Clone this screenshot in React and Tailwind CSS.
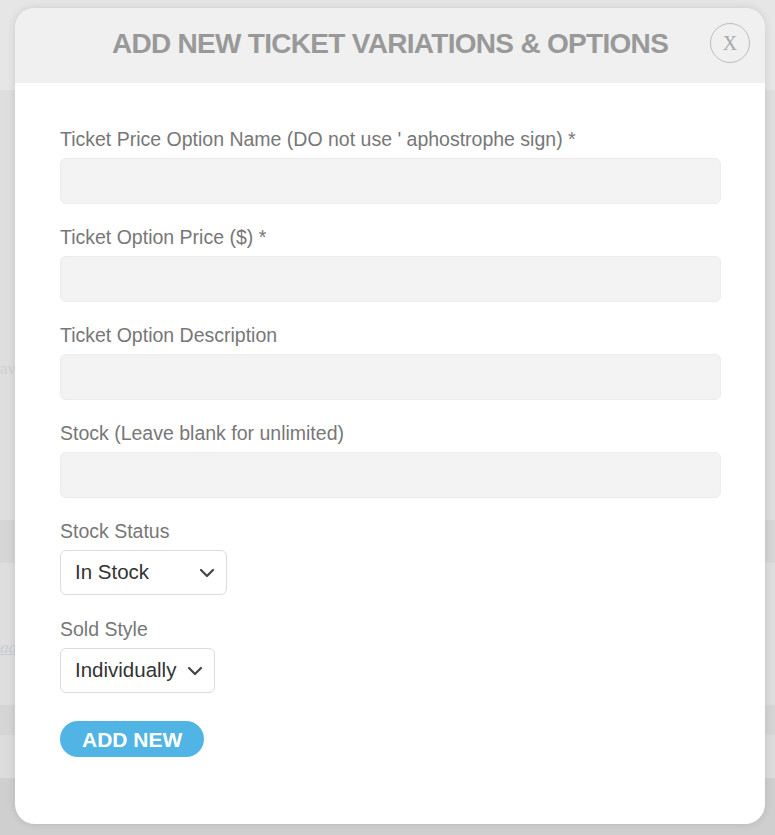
import { useState } from 'react'

const FIELDS = [
  { key: 'name', label: "Ticket Price Option Name (DO not use ' aphostrophe sign) *" },
  { key: 'price', label: 'Ticket Option Price ($) *' },
  { key: 'description', label: 'Ticket Option Description' },
  { key: 'stock', label: 'Stock (Leave blank for unlimited)' },
]

function Chevron() {
  return (
    <svg width="16" height="10" viewBox="0 0 16 10" className="pointer-events-none absolute top-1/2 right-[12px] -translate-y-1/2">
      <path d="M2 2 L8 8 L14 2" fill="none" stroke="#444" strokeWidth="2.2" strokeLinecap="round" strokeLinejoin="round" />
    </svg>
  )
}

function SelectBox({ value, options, onChange, width }) {
  return (
    <div className={`relative ${width}`}>
      <select
        value={value}
        onChange={(e) => onChange(e.target.value)}
        className="h-[45px] w-full appearance-none rounded-[6px] border border-[#dcdcdc] bg-white pl-[14px] pr-8 text-[20.5px] text-[#333] focus:outline-none"
      >
        {options.map((o) => (
          <option key={o}>{o}</option>
        ))}
      </select>
      <Chevron />
    </div>
  )
}

export default function App() {
  const [values, setValues] = useState({})
  const [stockStatus, setStockStatus] = useState('In Stock')
  const [soldStyle, setSoldStyle] = useState('Individually')

  return (
    <div className="relative h-[835px] w-full overflow-hidden bg-[#e4e4e4] font-['Liberation_Sans',Arial,sans-serif]">
      {/* dimmed page behind the modal */}
      <div className="flex h-full flex-col">
        <div className="h-[90px] bg-[#e6e6e6]" />
        <div className="relative h-[430px] bg-[#dedede]">
          <span className="absolute top-[266px] left-0 text-[17px] text-[#cfcfcf] font-['Liberation_Serif',serif]">av</span>
        </div>
        <div className="h-[43px] bg-[#d6d6d6]" />
        <div className="relative h-[142px] bg-[#dedede]">
          <span className="absolute top-[72px] left-0 text-[17px] italic text-[#c4ccd6] underline font-['Liberation_Serif',serif]">ad</span>
        </div>
        <div className="h-[30px] bg-[#d5d5d5]" />
        <div className="h-[43px] bg-[#dcdcdc]" />
        <div className="flex-1 bg-[#cfcfcf]" />
      </div>

      {/* modal */}
      <div className="absolute top-[8px] left-[15px] flex h-[816px] w-[750px] flex-col overflow-hidden rounded-[20px] bg-white shadow-[0_0_8px_rgba(0,0,0,0.12)]">
        <div className="relative flex h-[75px] items-center justify-center bg-[#f0f0f0] pb-[4px]">
          <h1 className="text-[28px] leading-none font-bold tracking-[-0.7px] text-[#999999]">
            ADD NEW TICKET VARIATIONS &amp; OPTIONS
          </h1>
          <button className="absolute top-[15px] right-[15px] flex h-[40px] w-[40px] items-center justify-center rounded-full border border-[#bdbdbd] text-[20px] leading-none text-[#a8a8a8] font-['Liberation_Serif',serif]">
            X
          </button>
        </div>

        <div className="flex flex-col pt-[45px] pr-[44px] pl-[45px]">
          {FIELDS.map(({ key, label }) => (
            <div key={key} className="mb-[22px]">
              <label className="mb-2 block text-[19.5px] leading-[22px] text-[#777]">{label}</label>
              <input
                type="text"
                value={values[key] ?? ''}
                onChange={(e) => setValues((prev) => ({ ...prev, [key]: e.target.value }))}
                className="block h-[46px] w-full rounded-[6px] border border-[#ececec] bg-[#f3f3f3] px-3 text-[18px] text-[#333] focus:outline-none"
              />
            </div>
          ))}

          <div className="mb-[23px]">
            <label className="mb-2 block text-[19.5px] leading-[22px] text-[#777]">Stock Status</label>
            <SelectBox
              value={stockStatus}
              onChange={setStockStatus}
              options={['In Stock', 'Out of Stock']}
              width="w-[167px]"
            />
          </div>

          <div className="mb-[28px]">
            <label className="mb-2 block text-[19.5px] leading-[22px] text-[#777]">Sold Style</label>
            <SelectBox
              value={soldStyle}
              onChange={setSoldStyle}
              options={['Individually', 'As a Group']}
              width="w-[155px]"
            />
          </div>

          <div>
            <button className="h-[36px] rounded-full bg-[#50b4e5] px-[22px] text-[21px] leading-none font-bold text-white">
              ADD NEW
            </button>
          </div>
        </div>
      </div>
    </div>
  )
}
